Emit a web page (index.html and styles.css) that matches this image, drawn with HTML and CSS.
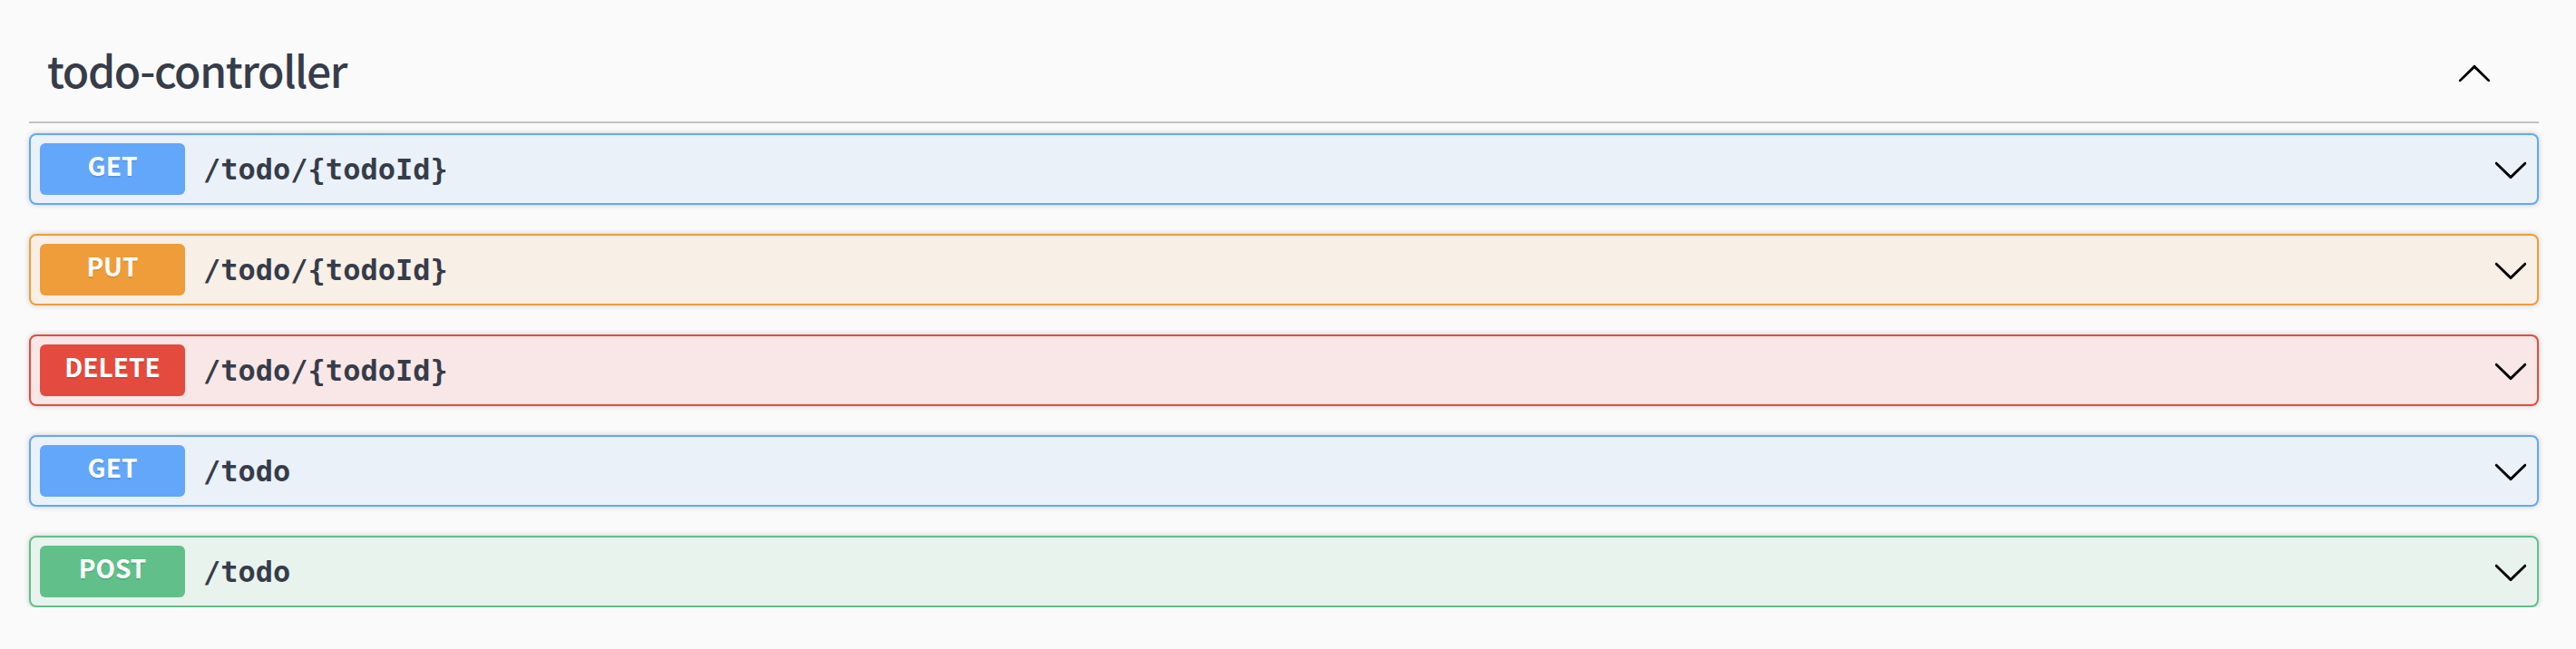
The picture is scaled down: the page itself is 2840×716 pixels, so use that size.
FILE: index.html
```html
<!DOCTYPE html>
<html lang="en">
<head>
<meta charset="utf-8">
<title>todo-controller</title>
<link rel="stylesheet" href="styles.css">
</head>
<body>
<div class="wrapper">
  <section class="tag-section">
    <h3 class="opblock-tag">
      <span class="tag-title">todo-controller</span>
      <button class="expand-operation" aria-label="collapse">
        <svg class="arrow" viewBox="0 0 20 20" width="40" height="40"><path d="M17.418 14.908c.272.268.709.268.979 0s.271-.701 0-.969l-7.908-7.83c-.27-.268-.707-.268-.979 0l-7.908 7.83c-.27.268-.27.701 0 .969.271.268.709.268.979 0L10 7.763l7.418 7.145z"/></svg>
      </button>
    </h3>
    <div class="operations">
      <div class="opblock opblock-get">
        <div class="summary">
          <span class="method">GET</span>
          <span class="path">/todo/{todoId}</span>
          <svg class="arrow" viewBox="0 0 20 20" width="40" height="40"><path d="M17.418 6.109c.272-.268.709-.268.979 0s.271.701 0 .969l-7.908 7.83c-.27.268-.707.268-.979 0l-7.908-7.83c-.27-.268-.27-.701 0-.969.271-.268.709-.268.979 0L10 13.25l7.418-7.141z"/></svg>
        </div>
      </div>
      <div class="opblock opblock-put">
        <div class="summary">
          <span class="method">PUT</span>
          <span class="path">/todo/{todoId}</span>
          <svg class="arrow" viewBox="0 0 20 20" width="40" height="40"><path d="M17.418 6.109c.272-.268.709-.268.979 0s.271.701 0 .969l-7.908 7.83c-.27.268-.707.268-.979 0l-7.908-7.830c-.27-.268-.27-.701 0-.969.271-.268.709-.268.979 0L10 13.25l7.418-7.141z"/></svg>
        </div>
      </div>
      <div class="opblock opblock-delete">
        <div class="summary">
          <span class="method">DELETE</span>
          <span class="path">/todo/{todoId}</span>
          <svg class="arrow" viewBox="0 0 20 20" width="40" height="40"><path d="M17.418 6.109c.272-.268.709-.268.979 0s.271.701 0 .969l-7.908 7.83c-.27.268-.707.268-.979 0l-7.908-7.83c-.27-.268-.27-.701 0-.969.271-.268.709-.268.979 0L10 13.25l7.418-7.141z"/></svg>
        </div>
      </div>
      <div class="opblock opblock-get">
        <div class="summary">
          <span class="method">GET</span>
          <span class="path">/todo</span>
          <svg class="arrow" viewBox="0 0 20 20" width="40" height="40"><path d="M17.418 6.109c.272-.268.709-.268.979 0s.271.701 0 .969l-7.908 7.83c-.27.268-.707.268-.979 0l-7.908-7.83c-.27-.268-.27-.701 0-.969.271-.268.709-.268.979 0L10 13.25l7.418-7.141z"/></svg>
        </div>
      </div>
      <div class="opblock opblock-post">
        <div class="summary">
          <span class="method">POST</span>
          <span class="path">/todo</span>
          <svg class="arrow" viewBox="0 0 20 20" width="40" height="40"><path d="M17.418 6.109c.272-.268.709-.268.979 0s.271.701 0 .969l-7.908 7.83c-.27.268-.707.268-.979 0l-7.908-7.83c-.27-.268-.27-.701 0-.969.271-.268.709-.268.979 0L10 13.25l7.418-7.141z"/></svg>
        </div>
      </div>
    </div>
  </section>
</div>
</body>
</html>
```
FILE: styles.css
```css
html, body {
  margin: 0;
  padding: 0;
  background: #fafafa;
}

body {
  font-family: "Noto Sans CJK KR", "Noto Sans", sans-serif;
  color: #3b4151;
}

.wrapper {
  padding: 0 41px 0 32px;
}

.opblock-tag {
  display: flex;
  align-items: flex-start;
  margin: 0 0 11px;
  padding: 44px 51px 26px 20px;
  border-bottom: 2px solid rgba(59, 65, 81, 0.3);
  font-size: 48px;
  font-weight: 500;
}

.tag-title {
  flex: 1;
  line-height: 64px;
  letter-spacing: -1.4px;
  color: #363c4a;
}

.expand-operation {
  margin: 16px 0 0;
  padding: 0;
  border: 0;
  background: none;
  width: 40px;
  height: 40px;
  display: flex;
}

.arrow {
  display: block;
  flex: none;
  fill: #000;
}

.operations {
  display: flex;
  flex-direction: column;
  gap: 32px;
}

.opblock {
  border: 2px solid #000;
  border-radius: 8px;
  box-shadow: 0 0 6px rgba(0, 0, 0, 0.19);
}

.summary {
  display: flex;
  align-items: center;
  padding: 9px 9px 9px 10px;
}

.method {
  flex: none;
  width: 160px;
  height: 57px;
  box-sizing: border-box;
  padding-bottom: 9px;
  line-height: 48px;
  text-align: center;
  border-radius: 6px;
  font-size: 28px;
  font-weight: 700;
  color: #fff;
  text-shadow: 0 2px 0 rgba(0, 0, 0, 0.1);
}

.path {
  flex: 1;
  padding: 0 20px;
  font-family: "DejaVu Sans Mono", "Liberation Mono", monospace;
  font-size: 32px;
  font-weight: 700;
  color: #363c4a;
}

.opblock-get { border-color: #62a7fa; background: #eaf1f9; }
.opblock-get .method { background: #62a7fa; }

.opblock-put { border-color: #ef9c3b; background: #f8efe6; }
.opblock-put .method { background: #ef9c3b; }

.opblock-delete { border-color: #e44b3e; background: #f8e7e6; }
.opblock-delete .method { background: #e44b3e; }

.opblock-post { border-color: #61c08a; background: #e9f3ee; }
.opblock-post .method { background: #61c08a; }
```
